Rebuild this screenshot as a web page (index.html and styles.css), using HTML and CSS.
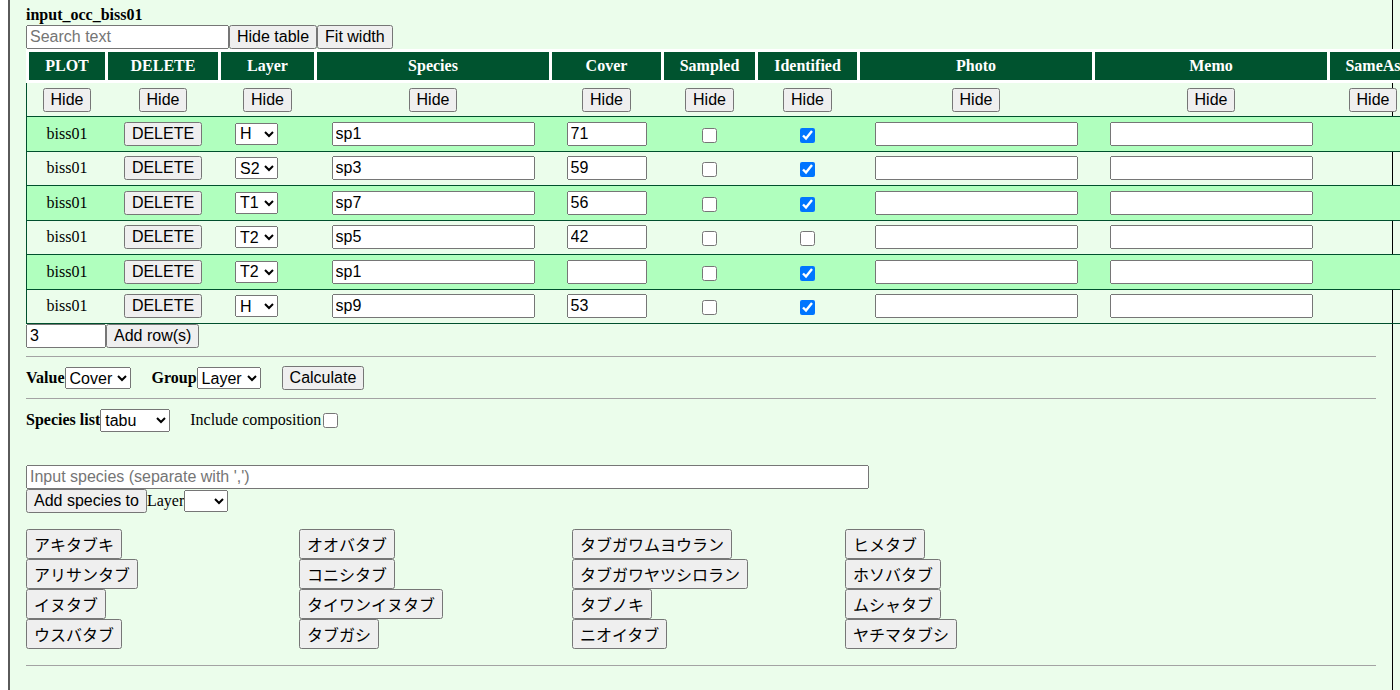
FILE: index.html
```html
<!DOCTYPE html>
<html lang="ja">
<head>
<meta charset="utf-8">
<title>input_occ_biss01</title>
<link rel="stylesheet" href="styles.css">
</head>
<body>
<div class="panel">
 <div class="inner">
  <div class="title">input_occ_biss01</div>
  <div class="toolbar">
    <input class="search" type="text" placeholder="Search text">
    <button class="btn">Hide table</button>
    <button class="btn">Fit width</button>
  </div>

  <table class="occ">
    <thead>
      <tr>
        <th class="c-plot">PLOT</th><th class="c-del">DELETE</th><th class="c-layer">Layer</th>
        <th class="c-species">Species</th><th class="c-cover">Cover</th><th class="c-sampled">Sampled</th>
        <th class="c-ident">Identified</th><th class="c-photo">Photo</th><th class="c-memo">Memo</th>
        <th class="c-same">SameAs</th>
      </tr>
    </thead>
    <tbody>
      <tr class="hide-row">
        <td><button class="btn">Hide</button></td><td><button class="btn">Hide</button></td>
        <td><button class="btn">Hide</button></td><td><button class="btn">Hide</button></td>
        <td><button class="btn">Hide</button></td><td><button class="btn">Hide</button></td>
        <td><button class="btn">Hide</button></td><td><button class="btn">Hide</button></td>
        <td><button class="btn">Hide</button></td><td><button class="btn">Hide</button></td>
      </tr>
      <tr class="data alt">
        <td>biss01</td><td><button class="btn">DELETE</button></td>
        <td><select class="sel-layer"><option selected>H</option><option>S1</option><option>S2</option><option>T1</option><option>T2</option></select></td>
        <td><input class="txt-wide" type="text" value="sp1"></td>
        <td><input class="txt-cover" type="text" value="71"></td>
        <td><input class="chk" type="checkbox"></td>
        <td><input class="chk" type="checkbox" checked></td>
        <td><input class="txt-wide" type="text"></td>
        <td><input class="txt-wide" type="text"></td>
        <td></td>
      </tr>
      <tr class="data">
        <td>biss01</td><td><button class="btn">DELETE</button></td>
        <td><select class="sel-layer"><option>H</option><option>S1</option><option selected>S2</option><option>T1</option><option>T2</option></select></td>
        <td><input class="txt-wide" type="text" value="sp3"></td>
        <td><input class="txt-cover" type="text" value="59"></td>
        <td><input class="chk" type="checkbox"></td>
        <td><input class="chk" type="checkbox" checked></td>
        <td><input class="txt-wide" type="text"></td>
        <td><input class="txt-wide" type="text"></td>
        <td></td>
      </tr>
      <tr class="data alt">
        <td>biss01</td><td><button class="btn">DELETE</button></td>
        <td><select class="sel-layer"><option>H</option><option>S1</option><option>S2</option><option selected>T1</option><option>T2</option></select></td>
        <td><input class="txt-wide" type="text" value="sp7"></td>
        <td><input class="txt-cover" type="text" value="56"></td>
        <td><input class="chk" type="checkbox"></td>
        <td><input class="chk" type="checkbox" checked></td>
        <td><input class="txt-wide" type="text"></td>
        <td><input class="txt-wide" type="text"></td>
        <td></td>
      </tr>
      <tr class="data">
        <td>biss01</td><td><button class="btn">DELETE</button></td>
        <td><select class="sel-layer"><option>H</option><option>S1</option><option>S2</option><option>T1</option><option selected>T2</option></select></td>
        <td><input class="txt-wide" type="text" value="sp5"></td>
        <td><input class="txt-cover" type="text" value="42"></td>
        <td><input class="chk" type="checkbox"></td>
        <td><input class="chk" type="checkbox"></td>
        <td><input class="txt-wide" type="text"></td>
        <td><input class="txt-wide" type="text"></td>
        <td></td>
      </tr>
      <tr class="data alt">
        <td>biss01</td><td><button class="btn">DELETE</button></td>
        <td><select class="sel-layer"><option>H</option><option>S1</option><option>S2</option><option>T1</option><option selected>T2</option></select></td>
        <td><input class="txt-wide" type="text" value="sp1"></td>
        <td><input class="txt-cover" type="text" value=""></td>
        <td><input class="chk" type="checkbox"></td>
        <td><input class="chk" type="checkbox" checked></td>
        <td><input class="txt-wide" type="text"></td>
        <td><input class="txt-wide" type="text"></td>
        <td></td>
      </tr>
      <tr class="data">
        <td>biss01</td><td><button class="btn">DELETE</button></td>
        <td><select class="sel-layer"><option selected>H</option><option>S1</option><option>S2</option><option>T1</option><option>T2</option></select></td>
        <td><input class="txt-wide" type="text" value="sp9"></td>
        <td><input class="txt-cover" type="text" value="53"></td>
        <td><input class="chk" type="checkbox"></td>
        <td><input class="chk" type="checkbox" checked></td>
        <td><input class="txt-wide" type="text"></td>
        <td><input class="txt-wide" type="text"></td>
        <td></td>
      </tr>
    </tbody>
  </table>

  <div class="addrow">
    <input class="num" type="text" value="3">
    <button class="btn">Add row(s)</button>
  </div>

  <hr class="rule">

  <div class="calc-row">
    <span class="field"><b>Value</b><select class="sel-value"><option>Cover</option></select></span>
    <span class="field"><b>Group</b><select class="sel-group"><option>Layer</option></select></span>
    <button class="btn">Calculate</button>
  </div>

  <hr class="rule rule-tight">

  <div class="list-row">
    <span class="field"><b>Species list</b><select class="sel-list"><option>tabu</option></select></span>
    <span class="field">Include composition<input class="chk chk-comp" type="checkbox"></span>
  </div>

  <input class="species-input" type="text" placeholder="Input species (separate with ',')">
  <div class="add-species">
    <button class="btn">Add species to</button>
    <span>Layer</span>
    <select class="sel-addlayer"><option></option><option>H</option><option>S1</option><option>S2</option><option>T1</option><option>T2</option></select>
  </div>

  <div class="species-grid">
    <button class="sp">アキタブキ</button>
    <button class="sp">アリサンタブ</button>
    <button class="sp">イヌタブ</button>
    <button class="sp">ウスバタブ</button>
    <button class="sp">オオバタブ</button>
    <button class="sp">コニシタブ</button>
    <button class="sp">タイワンイヌタブ</button>
    <button class="sp">タブガシ</button>
    <button class="sp">タブガワムヨウラン</button>
    <button class="sp">タブガワヤツシロラン</button>
    <button class="sp">タブノキ</button>
    <button class="sp">ニオイタブ</button>
    <button class="sp">ヒメタブ</button>
    <button class="sp">ホソバタブ</button>
    <button class="sp">ムシャタブ</button>
    <button class="sp">ヤチマタブシ</button>
  </div>

  <hr class="rule rule-bottom">
 </div>
</div>
</body>
</html>
```

FILE: styles.css
```css
body {
  margin: 0 0 0 8px;
  background: #ffffff;
  color: #000000;
  font-family: "Liberation Serif", "Times New Roman", serif;
  font-size: 16px;
}

input,
button,
select {
  font-family: "Liberation Sans", Arial, "Noto Sans CJK JP", sans-serif;
  font-size: 16px;
  margin: 0;
}

.panel {
  height: 690px;
  box-sizing: border-box;
  background: #ebfdeb;
  border-left: 2px solid #5a5a5a;
  padding-right: 7px;
}

.inner {
  height: 100%;
  box-sizing: border-box;
  border-right: 1px solid #000000;
  padding: 5px 16px 0 16px;
}

.title {
  font-weight: bold;
  line-height: 19px;
  margin-bottom: 1px;
}

.toolbar {
  display: flex;
  height: 24px;
}

.btn {
  height: 24px;
  padding: 1px 6px;
}

.search {
  width: 203px;
  height: 24px;
  box-sizing: border-box;
}

/* table */
.occ {
  width: max-content;
  border-collapse: separate;
  border-spacing: 0;
}

.occ th {
  background: #00532f;
  color: #ffffff;
  font-weight: bold;
  height: 28px;
  line-height: 28px;
  padding: 0;
  border-top: 3px solid #ffffff;
  border-bottom: 3px solid #ffffff;
  border-right: 3px solid #ffffff;
  white-space: nowrap;
}

.occ th:first-child {
  border-left: 3px solid #ffffff;
}

.c-plot { width: 76px; min-width: 76px; }
.c-del { width: 110px; min-width: 110px; }
.c-layer { width: 93px; min-width: 93px; }
.c-species { width: 232px; min-width: 232px; }
.c-cover { width: 109px; min-width: 109px; }
.c-sampled { width: 91px; min-width: 91px; }
.c-ident { width: 99px; min-width: 99px; }
.c-photo { width: 232px; min-width: 232px; }
.c-memo { width: 232px; min-width: 232px; }
.c-same { width: 86px; min-width: 86px; }

.occ td {
  padding: 0 3px 0 0;
  text-align: center;
  vertical-align: middle;
  white-space: nowrap;
}

.occ td:first-child {
  border-left: 1px solid #00502d;
  padding-left: 2px;
}

.hide-row td {
  height: 33px;
}

.data td {
  height: 33.5px;
  border-top: 1px solid #00502d;
}

.data:last-child td {
  border-bottom: 1px solid #00502d;
}

.data.alt {
  background: #b0ffbe;
}

.sel-layer {
  width: 43px;
  height: 22px;
  margin-right: 22px;
}

.txt-wide {
  width: 203px;
  height: 24px;
  box-sizing: border-box;
}

.txt-cover {
  width: 80px;
  height: 24px;
  box-sizing: border-box;
}

.chk {
  width: 15px;
  height: 15px;
  margin: 0;
  vertical-align: middle;
}

/* below table */
.addrow {
  display: flex;
  height: 24px;
}

.num {
  width: 80px;
  height: 24px;
  box-sizing: border-box;
}

.rule {
  border: 0;
  border-top: 1px solid #a3a3a3;
  height: 0;
  margin: 8px 0;
}

.rule-tight {
  margin-top: 7px;
}

.calc-row {
  display: flex;
  align-items: center;
  gap: 21px;
  height: 26px;
}

.field {
  display: flex;
  align-items: center;
}

.sel-value { width: 66px; height: 22px; }
.sel-group { width: 64px; height: 22px; }
.sel-list { width: 70px; height: 23px; }
.sel-addlayer { width: 44px; height: 22px; }

.list-row {
  display: flex;
  align-items: center;
  gap: 20px;
  height: 26px;
  margin-bottom: 32px;
}

.chk-comp {
  margin-left: 2px;
}

.species-input {
  display: block;
  width: 843px;
  height: 24px;
  box-sizing: border-box;
}

.add-species {
  display: flex;
  align-items: center;
  height: 24px;
}

.species-grid {
  display: grid;
  grid-template-columns: repeat(4, 273px);
  grid-template-rows: repeat(4, 30px);
  grid-auto-flow: column;
  justify-items: start;
  margin-top: 16px;
}

.sp {
  height: 30px;
  padding: 1px 6px;
  font-family: "Liberation Sans", "Noto Sans CJK JP", sans-serif;
}

.rule-bottom {
  margin-top: 16px;
}
```
